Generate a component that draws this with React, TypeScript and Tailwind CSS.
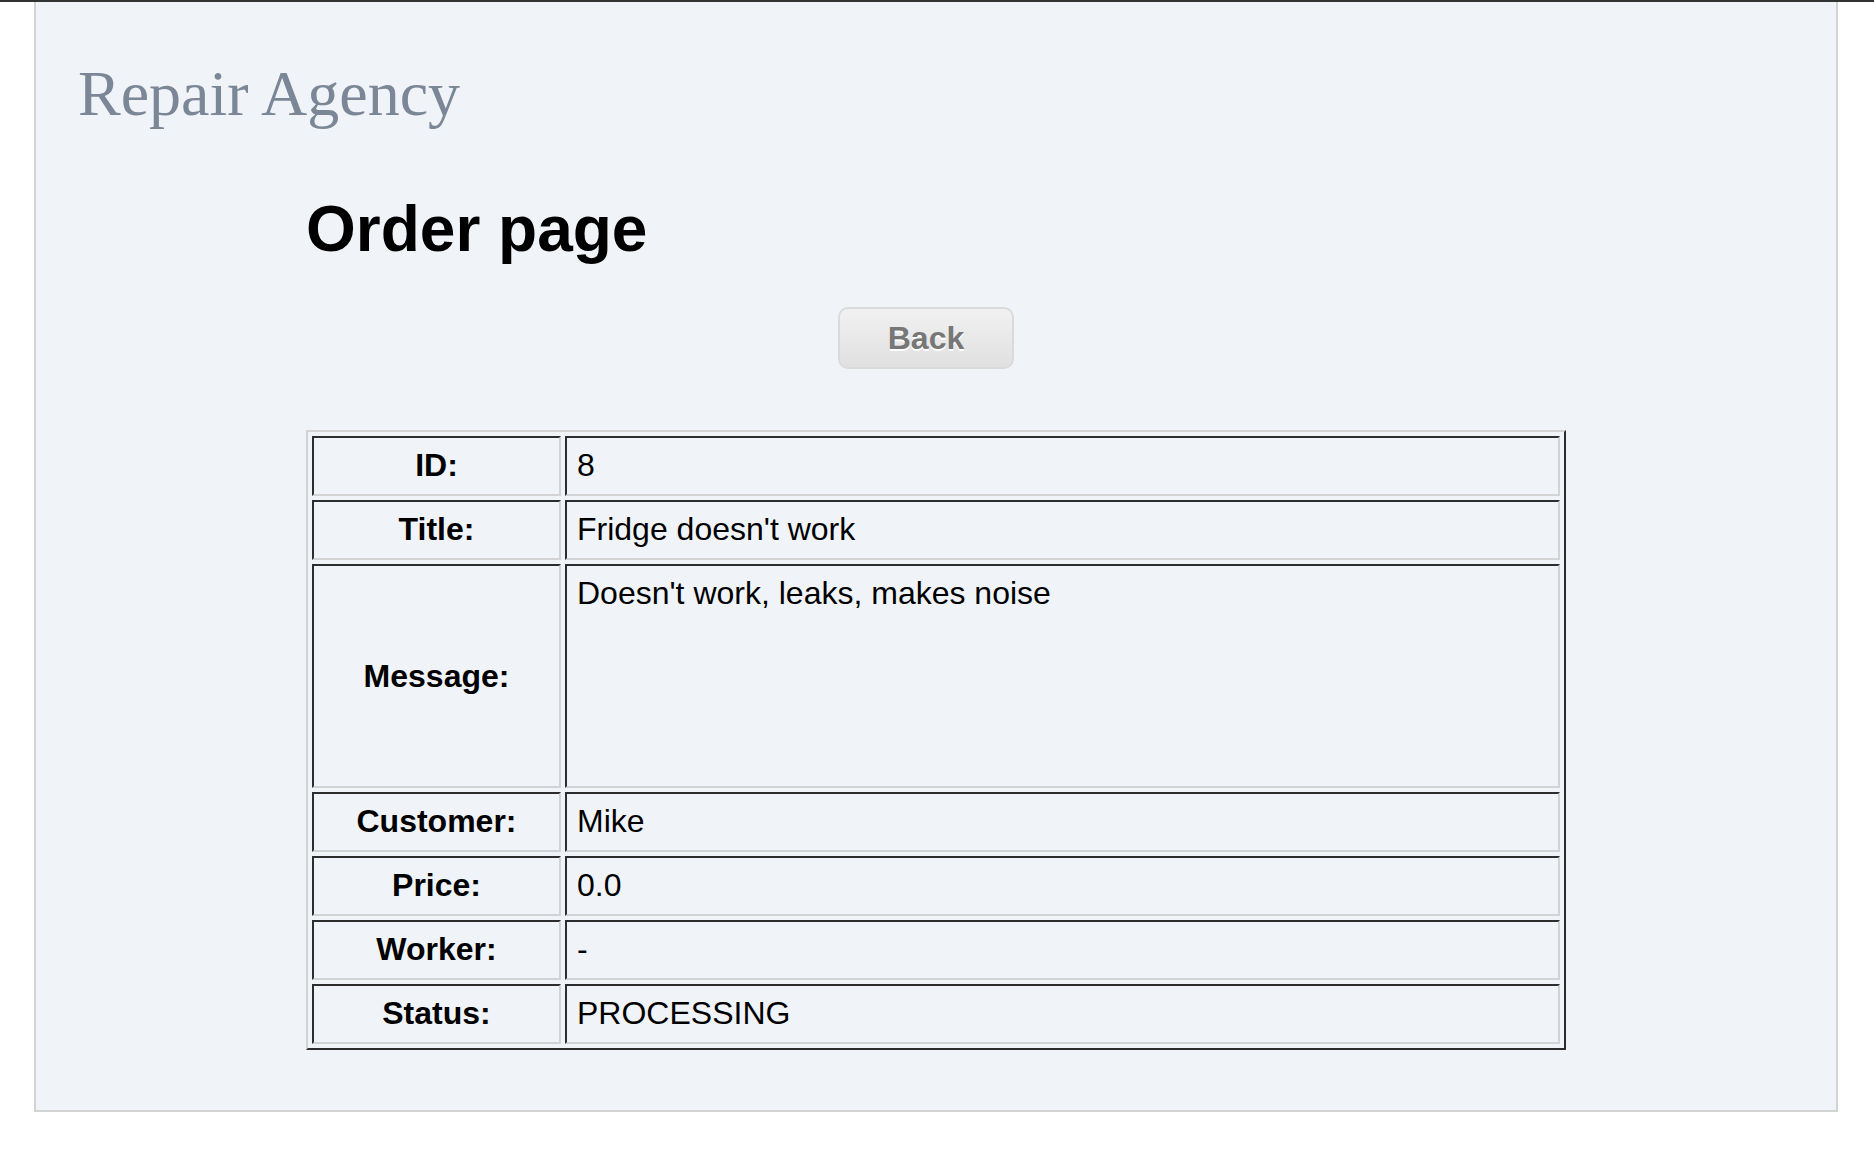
const rows: { label: string; value: string; tall?: boolean }[] = [
  { label: "ID:", value: "8" },
  { label: "Title:", value: "Fridge doesn't work" },
  { label: "Message:", value: "Doesn't work, leaks, makes noise", tall: true },
  { label: "Customer:", value: "Mike" },
  { label: "Price:", value: "0.0" },
  { label: "Worker:", value: "-" },
  { label: "Status:", value: "PROCESSING" },
];

export default function App() {
  return (
    <div className="min-h-screen bg-white font-['Liberation_Sans',Arial,sans-serif] text-black">
      <div className="h-[2px] bg-[#333]" />
      <div className="ml-[34px] w-[1804px] h-[1110px] pt-[60px] border-x-2 border-b-2 border-[#d3d3d3] bg-[#f0f4f9]">
        <div className="ml-[42px] h-[64px] text-[64px] leading-none text-[#7b8797] font-['Liberation_Serif',serif]">
          Repair Agency
        </div>

        <div className="ml-[270px]">
          <h1 className="mt-[71px] h-[64px] text-[64px] leading-none font-bold">Order page</h1>

          <div className="mt-[46px] ml-[532px]">
            <button className="w-[176px] h-[62px] rounded-[10px] border-2 border-[#dadada] bg-gradient-to-b from-[#f1f1f1] to-[#e0e0e0] text-[32px] font-bold text-[#777] [text-shadow:0_2px_0_#fff]">
              Back
            </button>
          </div>

          <table className="mt-[61px] w-[1260px] border-separate border-spacing-[4px] border-2 border-t-[#d3d3d3] border-l-[#d3d3d3] border-r-[#2d2d2d] border-b-[#2d2d2d] text-[32px]">
            <tbody>
              {rows.map((r) => (
                <tr key={r.label}>
                  <td
                    className={`w-[249px] border-2 border-t-[#2d2d2d] border-l-[#2d2d2d] border-r-[#d3d3d3] border-b-[#d3d3d3] text-center font-bold align-middle ${
                      r.tall ? "h-[224px]" : "h-[60px] pb-[2px]"
                    }`}
                  >
                    {r.label}
                  </td>
                  <td
                    className={`border-2 border-t-[#2d2d2d] border-l-[#2d2d2d] border-r-[#d3d3d3] border-b-[#d3d3d3] pl-[10px] ${
                      r.tall ? "h-[224px] align-top pt-[3px]" : "h-[60px] pb-[2px] align-middle"
                    }`}
                  >
                    {r.value}
                  </td>
                </tr>
              ))}
            </tbody>
          </table>
        </div>
      </div>
    </div>
  );
}
